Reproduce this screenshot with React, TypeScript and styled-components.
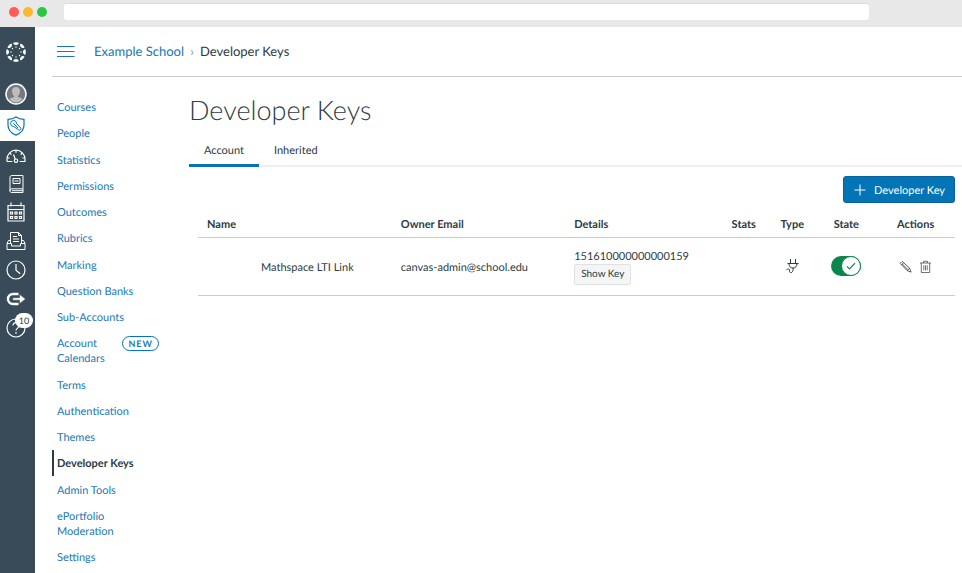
import React from "react";
import styled, { createGlobalStyle, css } from "styled-components";

const ink = "#2d3b45";
const link = "#1a78b8";
const brand = "#0374b5";
const rail = "#394b58";
const line = "#c7cdd1";

const GlobalStyle = createGlobalStyle`
  *, *::before, *::after { box-sizing: border-box; }
  body { margin: 0; background: #fff; color: ${ink}; font-family: Lato, "Open Sans", sans-serif; font-size: 11px; line-height: 15px; text-rendering: geometricPrecision; }
  button, input { font: inherit; color: inherit; text-rendering: inherit; }
  svg { display: block; }
`;

const Page = styled.div`
  display: flex;
  flex-direction: column;
  min-height: 100vh;
`;

const BrowserBar = styled.header`
  display: flex;
  align-items: center;
  height: 27px;
  padding: 0 93px 4px 9px;
  background: #e8e8e8;
`;

const Lights = styled.div`
  display: flex;
  gap: 4px;
  width: 55px;
`;

const Light = styled.span<{ $color: string }>`
  width: 10px;
  height: 10px;
  border-radius: 50%;
  background: ${(p) => p.$color};
`;

const Address = styled.input`
  flex: 1;
  min-width: 0;
  height: 17px;
  padding: 0 8px;
  border: 0;
  border-top: 1px solid #dcdcdc;
  border-radius: 3px;
  background: #fff;
`;

const Shell = styled.div`
  display: flex;
  flex: 1;
`;

const Rail = styled.nav`
  display: flex;
  flex-direction: column;
  flex: 0 0 35px;
  background: ${rail};
  color: #fff;
`;

const RailLink = styled.a<{ $height: number; $active?: boolean }>`
  display: flex;
  align-items: center;
  justify-content: center;
  height: ${(p) => p.$height}px;
  padding-right: 3px;
  color: ${(p) => (p.$active ? brand : "#fff")};
  background: ${(p) => (p.$active ? "#fff" : "transparent")};
  position: relative;
`;

const Count = styled.span`
  position: absolute;
  top: 0;
  right: 2px;
  width: 18px;
  height: 15px;
  border-radius: 8px;
  background: #fff;
  color: ${ink};
  font-size: 9px;
  line-height: 15px;
  text-align: center;
`;

const Body = styled.div`
  display: flex;
  flex-direction: column;
  flex: 1;
  min-width: 0;
  padding-left: 17px;
`;

const TopBar = styled.div`
  display: flex;
  align-items: center;
  height: 50px;
  padding: 0 5px 2px;
  border-bottom: 1px solid ${line};
`;

const MenuButton = styled.button`
  width: 18px;
  margin-right: 19px;
  padding: 2px 0 0;
  border: 0;
  background: none;
  color: ${link};
`;

const Crumbs = styled.nav`
  display: flex;
  align-items: center;
  font-size: 13px;
  line-height: 18px;
`;

const Link = styled.a`
  color: ${link};
  text-decoration: none;
`;

const CrumbGap = styled.span`
  display: flex;
  justify-content: center;
  width: 16px;
  color: #8b969e;
`;

const Columns = styled.div`
  display: flex;
  flex: 1;
`;

const SideNav = styled.ul`
  display: flex;
  flex-direction: column;
  justify-content: space-between;
  flex: 0 0 137px;
  margin: 0;
  padding: 17px 0 3px;
  list-style: none;
`;

const SideLink = styled.a<{ $active?: boolean }>`
  display: flex;
  justify-content: space-between;
  padding: 6px 30px 5px 3px;
  border-left: 2px solid transparent;
  color: ${link};
  text-decoration: none;
  ${(p) =>
    p.$active &&
    css`
      border-color: ${ink};
      color: ${ink};
      font-weight: 700;
    `}
`;

const SideText = styled.span<{ $narrow?: boolean }>`
  max-width: ${(p) => (p.$narrow ? 60 : 84)}px;
`;

const NewPill = styled.span`
  height: 15px;
  padding: 0 5px;
  border: 1px solid ${brand};
  border-radius: 8px;
  font-size: 9px;
  font-weight: 700;
  letter-spacing: 1px;
  line-height: 13px;
`;

const Main = styled.main`
  flex: 1;
  min-width: 0;
  padding-top: 13px;
`;

const Title = styled.h1`
  margin: 0;
  font-size: 27px;
  font-weight: 300;
  line-height: 40px;
`;

const Tabs = styled.div`
  display: flex;
  margin-top: 6px;
  border-bottom: 2px solid #eeeff0;
`;

const Tab = styled.button<{ $active?: boolean }>`
  height: 31px;
  margin-bottom: -2px;
  padding: 1px 15px 0;
  border: 0;
  border-bottom: 3px solid ${(p) => (p.$active ? brand : "transparent")};
  background: none;
`;

const Panel = styled.section`
  padding: 9px 7px 0 9px;
`;

const PanelActions = styled.div`
  display: flex;
  justify-content: flex-end;
`;

const PrimaryButton = styled.button`
  display: flex;
  align-items: center;
  gap: 8px;
  height: 27px;
  padding: 1px 9px 0 10px;
  border: 1px solid #0a6299;
  border-radius: 3px;
  background: ${brand};
  color: #fff;
`;

const Table = styled.table`
  width: 100%;
  margin-top: 8px;
  border-collapse: collapse;
  table-layout: fixed;
`;

const Col = styled.col<{ $share: string }>`
  width: ${(p) => p.$share};
`;

const HeadCell = styled.th<{ $center?: boolean }>`
  height: 26px;
  padding: 2px ${(p) => (p.$center ? 0 : 9)}px 0;
  border-bottom: 1px solid ${line};
  font-weight: 700;
  text-align: ${(p) => (p.$center ? "center" : "left")};
`;

const Cell = styled.td<{ $indent?: boolean }>`
  height: 58px;
  padding: 2px 0 0 ${(p) => (p.$indent ? 63 : 9)}px;
  border-bottom: 1px solid ${line};
`;

const IconCell = styled(Cell)`
  padding: 0;
`;

const Centered = styled.div`
  display: flex;
  align-items: center;
  justify-content: center;
`;

const Stack = styled.div`
  display: flex;
  flex-direction: column;
  align-items: flex-start;
`;

const SmallButton = styled.button`
  height: 21px;
  padding: 0 6px;
  border: 1px solid #dfe2e4;
  border-radius: 2px;
  background: #f5f5f5;
  font-size: 10px;
`;

const IconButton = styled.button`
  padding: 0;
  border: 0;
  background: none;
  & + & { margin-left: 7px; }
`;

const Switch = styled.label`
  display: flex;
  justify-content: flex-end;
  width: 30px;
  height: 20px;
  border-radius: 10px;
  background: #0b874b;
  position: relative;
`;

const SwitchInput = styled.input`
  position: absolute;
  inset: 0;
  width: 100%;
  height: 100%;
  margin: 0;
  opacity: 0;
`;

const Knob = styled.span`
  display: flex;
  align-items: center;
  justify-content: center;
  width: 20px;
  height: 20px;
  border: 1px solid #0b874b;
  border-radius: 50%;
  background: #fff;
  color: #0b874b;
`;

type IconProps = { size?: number; view?: number; width?: number; children: React.ReactNode };
const Icon = ({ size = 20, view = 20, width = 1.2, children }: IconProps) => (
  <svg width={size} height={size} viewBox={`0 0 ${view} ${view}`} fill="none" stroke="currentColor" strokeWidth={width} aria-hidden="true">
    {children}
  </svg>
);

const angles = [0, 45, 90, 135, 180, 225, 270, 315];

const LogoIcon = () => (
  <Icon>
    {angles.map((a) => (
      <g key={a} transform={`rotate(${a} 10 10)`} fill="currentColor" stroke="none">
        <path d="M7.200 .7C9 0 11 0 12.800 .7 12.400 3.800 7.600 3.800 7.200 .7Z" />
        <circle cx="10" cy="5" r="0.7" />
      </g>
    ))}
  </Icon>
);

const AvatarIcon = () => (
  <Icon size={22} view={22}>
    <circle cx="11" cy="11" r="10" fill="#737b80" strokeWidth="1.5" />
    <path d="M11 4c-2.700 0-4 1.800-4 4.200 0 2 .8 3.600 2 4.500v1.300c-1.500.6-3.800.9-4.500 2.500a8.700 8.700 0 0 0 13 0c-.7-1.600-3-1.900-4.500-2.500v-1.300c1.200-.9 2-2.500 2-4.500C15 5.800 13.700 4 11 4Z" fill="#bdbdbd" stroke="none" />
  </Icon>
);

const ShieldIcon = () => (
  <Icon>
    <path d="M10 .9C7.700 2.500 5 3.200 2 3.400V9c0 5 3 8.200 8 10.100 5-1.900 8-5.100 8-10.100V3.400C15 3.200 12.300 2.500 10 .9Z" />
    <path d="M7.700 10.500a3 3 0 1 1 2.900-3l4.200 4.600c.8 1-.9 2.700-1.900 1.900L7.700 10.500Z" strokeWidth="1" />
    <path d="m7.300 7.300 4.800 4.700" strokeWidth="1" />
  </Icon>
);

const GaugeIcon = () => (
  <Icon>
    <path d="M1 15.500v-2.300a9 9 0 0 1 18 0v2.300h-5.300M1 15.500h5.300" />
    <path d="M10 4.300v2.500M3.700 7l1.700 1.700M16.300 7l-1.700 1.700M1.300 12h2.300M18.700 12h-2.300M9.300 13.200 7.500 8.500" />
    <circle cx="10" cy="14.700" r="1.700" />
  </Icon>
);

const BookIcon = () => (
  <Icon width={1}>
    <path d="M4 17V3.200C4 2 4.800 1.500 6 1.500h11v13.300H6c-3 0-3 3.700 0 3.700h11v-3.700M6 16.700h11M7 4.500h7v5H7zM8.500 7h4" />
  </Icon>
);

const CalendarIcon = () => (
  <Icon>
    <path d="M2 3.500h16v15.500h-16zM2 7.500h16M5 .5v4M15 .5v4" />
    <path d="M4.500 10h2v2h-2zM9 10h2v2H9zM13.500 10h2v2h-2zM4.500 14.500h2v2h-2zM9 14.500h2v2H9zM13.500 14.500h2v2h-2z" />
  </Icon>
);

const InboxIcon = () => (
  <Icon width={1}>
    <path d="M4.500 12.500v-11h8l3 3v8M12.500 1.500v3h3M7 5.500h4M7 8h6M7 10.500h6M4.500 9.500h-2l-1.500 3V18.500h18v-6l-1.500-3h-2M1 12.500h4.500v2.500h9v-2.500H19" />
  </Icon>
);

const ClockIcon = () => (
  <Icon>
    <circle cx="10" cy="10" r="9" />
    <path d="M10 4v6.200l4.200 3.600" />
  </Icon>
);

const ExitIcon = () => (
  <Icon>
    <path d="M12.500 5H7a5 5 0 0 0 0 10h5.500" strokeWidth="2.400" />
    <path d="M6.800 8.800h6.700V5.300L19.500 10l-6 4.700v-3.500H6.800Z" fill="currentColor" stroke={rail} strokeWidth="0.500" />
  </Icon>
);

const HelpIcon = () => (
  <Icon>
    <circle cx="10" cy="10" r="9" />
    <path d="M7 7.500C7 3.500 13.200 4 13.200 7.500c0 2.600-3.200 2.600-3.200 5M10 14v1.700" />
  </Icon>
);

const PlugIcon = () => (
  <Icon size={16} view={16} width={1}>
    <path d="M6.500 1v4M11.500 1v4M3.500 5.500h11M5 5.500c0 3 1.500 4.500 4 4.500s4-1.500 4-4.500M9 10c.5 3-1 5.200-2.700 4.600-1.600-.6.200-3.100-1.400-3.600-1.100-.3-2 .3-2.600 1.200" />
  </Icon>
);

const PencilIcon = () => (
  <Icon size={13} view={13} width={0.8}>
    <path d="M1.200 3.400 3.200 1.400 10.600 8.200l1.500 3.900-4-1.500ZM2.600 4.700l2-2M8.100 10.600l2.500-2.400M3.300 4l5.500 5.500" />
  </Icon>
);

const TrashIcon = () => (
  <Icon size={13} view={13} width={0.7}>
    <path d="M1 3h11M4.500 3V1.300h4V3M2.300 3v9.500h8.400V3M4.800 5.300v5M6.500 5.300v5M8.200 5.300v5" />
  </Icon>
);

const railItems = [
  { label: "Dashboard home", height: 50, icon: <LogoIcon /> },
  { label: "Account", height: 33, icon: <AvatarIcon /> },
  { label: "Admin", height: 31, icon: <ShieldIcon />, active: true },
  { label: "Dashboard", height: 29, icon: <GaugeIcon /> },
  { label: "Courses", height: 27, icon: <BookIcon /> },
  { label: "Calendar", height: 30, icon: <CalendarIcon /> },
  { label: "Inbox", height: 28, icon: <InboxIcon /> },
  { label: "History", height: 30, icon: <ClockIcon /> },
  { label: "Commons", height: 28, icon: <ExitIcon /> },
  { label: "Help", height: 30, icon: <HelpIcon />, count: 10 },
];

const sections = [
  "Courses", "People", "Statistics", "Permissions", "Outcomes", "Rubrics", "Marking", "Question Banks", "Sub-Accounts",
  "Account Calendars", "Terms", "Authentication", "Themes", "Developer Keys", "Admin Tools", "ePortfolio Moderation", "Settings",
];

const shares = ["25.6%", "22.9%", "20.4%", "6.4%", "6.4%", "7.9%", "10.4%"];

export default function App() {
  return (
    <Page>
      <GlobalStyle />
      <BrowserBar>
        <Lights>
          <Light $color="#ff5c55" />
          <Light $color="#fdb92c" />
          <Light $color="#27c840" />
        </Lights>
        <Address aria-label="Address" />
      </BrowserBar>
      <Shell>
        <Rail aria-label="Global navigation">
          {railItems.map((item) => (
            <RailLink key={item.label} href="#" aria-label={item.label} $height={item.height} $active={item.active}>
              {item.icon}
              {item.count && <Count>{item.count}</Count>}
            </RailLink>
          ))}
        </Rail>
        <Body>
          <TopBar>
            <MenuButton aria-label="Toggle navigation">
              <svg width="18" height="13" viewBox="0 0 18 13" stroke="currentColor" aria-hidden="true">
                <path d="M0 1.500h17.500M0 6.500h17.500M0 11.500h17.500" />
              </svg>
            </MenuButton>
            <Crumbs aria-label="Breadcrumb">
              <Link href="#">Example School</Link>
              <CrumbGap>›</CrumbGap>
              <span>Developer Keys</span>
            </Crumbs>
          </TopBar>
          <Columns>
            <SideNav>
              {sections.map((name) => (
                <li key={name}>
                  <SideLink href="#" $active={name === "Developer Keys"}>
                    <SideText $narrow={name === "Account Calendars"}>{name}</SideText>
                    {name === "Account Calendars" && <NewPill>NEW</NewPill>}
                  </SideLink>
                </li>
              ))}
            </SideNav>
            <Main>
              <Title>Developer Keys</Title>
              <Tabs role="tablist">
                <Tab role="tab" aria-selected="true" $active>Account</Tab>
                <Tab role="tab" aria-selected="false">Inherited</Tab>
              </Tabs>
              <Panel>
                <PanelActions>
                  <PrimaryButton>
                    <Icon size={12} view={12} width={1}>
                      <path d="M6 .5v11M.5 6h11" />
                    </Icon>
                    Developer Key
                  </PrimaryButton>
                </PanelActions>
                <Table>
                  <colgroup>
                    {shares.map((share, i) => (
                      <Col key={i} $share={share} />
                    ))}
                  </colgroup>
                  <thead>
                    <tr>
                      <HeadCell>Name</HeadCell>
                      <HeadCell>Owner Email</HeadCell>
                      <HeadCell>Details</HeadCell>
                      <HeadCell $center>Stats</HeadCell>
                      <HeadCell $center>Type</HeadCell>
                      <HeadCell $center>State</HeadCell>
                      <HeadCell $center>Actions</HeadCell>
                    </tr>
                  </thead>
                  <tbody>
                    <tr>
                      <Cell $indent>Mathspace LTI Link</Cell>
                      <Cell>canvas-admin@school.edu</Cell>
                      <Cell>
                        <Stack>
                          <span>151610000000000159</span>
                          <SmallButton>Show Key</SmallButton>
                        </Stack>
                      </Cell>
                      <IconCell />
                      <IconCell>
                        <Centered><PlugIcon /></Centered>
                      </IconCell>
                      <IconCell>
                        <Centered>
                          <Switch>
                            <SwitchInput type="checkbox" defaultChecked aria-label="Key state" />
                            <Knob>
                              <Icon size={10} view={10} width={1.2}>
                                <path d="m1 5.300 2.500 2.500L9 2.200" />
                              </Icon>
                            </Knob>
                          </Switch>
                        </Centered>
                      </IconCell>
                      <IconCell>
                        <Centered>
                          <IconButton aria-label="Edit key"><PencilIcon /></IconButton>
                          <IconButton aria-label="Delete key"><TrashIcon /></IconButton>
                        </Centered>
                      </IconCell>
                    </tr>
                  </tbody>
                </Table>
              </Panel>
            </Main>
          </Columns>
        </Body>
      </Shell>
    </Page>
  );
}
